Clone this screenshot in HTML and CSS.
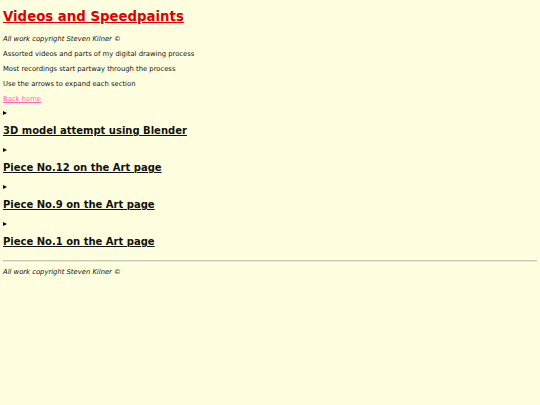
FILE: index.html
```html
<!DOCTYPE html>
<html>
<head>
<meta charset="utf-8">
<link rel="stylesheet" href="styles.css">
</head>
<body>
<h1 class="title"><a href="#" class="title-link">Videos and Speedpaints</a></h1>
<p class="note copy">All work copyright Steven Kilner ©</p>
<p class="note">Assorted videos and parts of my digital drawing process</p>
<p class="note">Most recordings start partway through the process</p>
<p class="note">Use the arrows to expand each section</p>
<p class="note"><a href="#" class="back">Back home</a></p>
<div class="section">
  <div class="arrow-line"><span class="arrow"></span></div>
  <h2 class="heading">3D model attempt using Blender</h2>
</div>
<div class="section">
  <div class="arrow-line"><span class="arrow"></span></div>
  <h2 class="heading">Piece No.12 on the Art page</h2>
</div>
<div class="section">
  <div class="arrow-line"><span class="arrow"></span></div>
  <h2 class="heading">Piece No.9 on the Art page</h2>
</div>
<div class="section">
  <div class="arrow-line"><span class="arrow"></span></div>
  <h2 class="heading">Piece No.1 on the Art page</h2>
</div>
<hr class="rule">
<p class="note copy footer">All work copyright Steven Kilner ©</p>
</body>
</html>
```
FILE: styles.css
```css
html, body {
  background: #ffffe0;
}
body {
  margin: 0;
  padding: 8px 3px 0;
  font-family: "DejaVu Sans", Verdana, sans-serif;
  color: #111;
}
.title {
  margin: 0;
  font-size: 13.3px;
  line-height: 18px;
  font-weight: bold;
}
.title-link {
  color: #e00000;
  text-decoration: underline;
}
.note {
  margin: 5px 0 0;
  font-size: 6.8px;
  line-height: 10px;
}
.copy {
  margin-top: 8px;
  font-style: italic;
}
.back {
  color: #ff69b4;
  text-decoration: underline;
}
.section {
  margin-top: 4px;
}
.section + .section {
  margin-top: 7px;
}
.arrow-line {
  height: 10px;
  display: flex;
  align-items: center;
}
.arrow {
  display: block;
  width: 0;
  height: 0;
  border-left: 4px solid #000;
  border-top: 2.5px solid transparent;
  border-bottom: 2.5px solid transparent;
}
.heading {
  margin: 6px 0 0;
  font-size: 10px;
  line-height: 14px;
  font-weight: bold;
  text-decoration: underline;
}
.rule {
  margin: 11px 0 0;
  border: 0;
  border-top: 1px solid #c8c8b8;
  border-bottom: 1px solid #e8e8d8;
  height: 0;
}
.footer {
  margin-top: 5px;
}
```
